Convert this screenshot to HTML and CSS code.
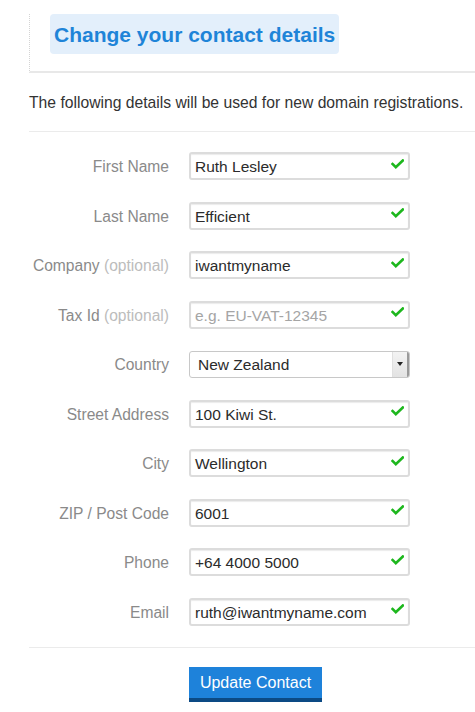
FILE: index.html
```html
<!DOCTYPE html>
<html>
<head>
<meta charset="utf-8">
<link rel="stylesheet" href="styles.css">
</head>
<body>
<div class="page">
  <div class="header">
    <h1 class="title">Change your contact details</h1>
  </div>
  <p class="intro">The following details will be used for new domain registrations.</p>
  <form class="form">
    <div class="row"><label class="label">First Name</label><div class="field"><span class="value">Ruth Lesley</span><svg class="check" viewBox="0 0 13 10"><polyline points="1.5,5 4.8,8.2 11.8,1.5"/></svg></div></div>
    <div class="row"><label class="label">Last Name</label><div class="field"><span class="value">Efficient</span><svg class="check" viewBox="0 0 13 10"><polyline points="1.5,5 4.8,8.2 11.8,1.5"/></svg></div></div>
    <div class="row"><label class="label">Company <span class="opt">(optional)</span></label><div class="field"><span class="value">iwantmyname</span><svg class="check" viewBox="0 0 13 10"><polyline points="1.5,5 4.8,8.2 11.8,1.5"/></svg></div></div>
    <div class="row"><label class="label">Tax Id <span class="opt">(optional)</span></label><div class="field"><span class="value placeholder">e.g. EU-VAT-12345</span><svg class="check" viewBox="0 0 13 10"><polyline points="1.5,5 4.8,8.2 11.8,1.5"/></svg></div></div>
    <div class="row"><label class="label">Country</label><div class="select"><span class="value">New Zealand</span><span class="arrow"><span class="tri"></span></span></div></div>
    <div class="row"><label class="label">Street Address</label><div class="field"><span class="value">100 Kiwi St.</span><svg class="check" viewBox="0 0 13 10"><polyline points="1.5,5 4.8,8.2 11.8,1.5"/></svg></div></div>
    <div class="row"><label class="label">City</label><div class="field"><span class="value">Wellington</span><svg class="check" viewBox="0 0 13 10"><polyline points="1.5,5 4.8,8.2 11.8,1.5"/></svg></div></div>
    <div class="row"><label class="label">ZIP / Post Code</label><div class="field"><span class="value">6001</span><svg class="check" viewBox="0 0 13 10"><polyline points="1.5,5 4.8,8.2 11.8,1.5"/></svg></div></div>
    <div class="row"><label class="label">Phone</label><div class="field"><span class="value">+64 4000 5000</span><svg class="check" viewBox="0 0 13 10"><polyline points="1.5,5 4.8,8.2 11.8,1.5"/></svg></div></div>
    <div class="row"><label class="label">Email</label><div class="field"><span class="value">ruth@iwantmyname.com</span><svg class="check" viewBox="0 0 13 10"><polyline points="1.5,5 4.8,8.2 11.8,1.5"/></svg></div></div>
    <div class="actions"><button type="button" class="btn">Update Contact</button></div>
  </form>
</div>
</body>
</html>
```
FILE: styles.css
```css
* { box-sizing: border-box; }
body {
  margin: 0;
  font-family: "Liberation Sans", Arial, Helvetica, sans-serif;
  color: #333;
  background: #fff;
}
.page {
  padding: 14px 0 0 29px;
}
.header {
  border-left: 1px dotted #d4d4d4;
  border-bottom: 2px solid #e8e8e8;
  padding: 0 0 17px 20px;
}
.title {
  display: inline-block;
  margin: 0;
  padding: 0 4px;
  height: 40px;
  line-height: 42px;
  font-size: 21px;
  font-weight: bold;
  color: #1e84d8;
  background: #e3effb;
  border-radius: 4px;
}
.intro {
  margin: 0;
  padding: 21px 0 19px;
  font-size: 15.7px;
  line-height: 18px;
  color: #333;
  border-bottom: 1px solid #ebebeb;
}
.form {
  padding-top: 20px;
}
.row {
  display: grid;
  grid-template-columns: 140px 221px;
  column-gap: 20px;
  align-items: center;
  margin-bottom: 21.5px;
  height: 28px;
}
.label {
  text-align: right;
  font-size: 15.6px;
  color: #8a8a8a;
  padding-top: 2px;
}
.opt {
  color: #bcbcbc;
}
.field {
  display: flex;
  align-items: center;
  justify-content: space-between;
  height: 28px;
  border: 2px solid #dcdcdc;
  border-radius: 3px;
  padding: 0 4px 0 4px;
  background: #fff;
  box-shadow: inset 0 1px 1px rgba(0,0,0,0.08);
}
.value {
  font-size: 15.5px;
  color: #2b2b2b;
  padding-top: 2px;
}
.placeholder {
  color: #a5a5a5;
}
.check {
  width: 13px;
  height: 10px;
  margin-top: -5px;
  fill: none;
  stroke: #1db71d;
  stroke-width: 2.6;
  stroke-linecap: square;
}
.select {
  display: flex;
  align-items: stretch;
  justify-content: space-between;
  height: 27px;
  border: 1px solid #c8c8c8;
  border-radius: 3px;
  background: #fff;
}
.select .value {
  align-self: center;
  padding-left: 8px;
}
.arrow {
  width: 17px;
  background: linear-gradient(#f3f3f3, #e3e3e3);
  border-left: 1px solid #e0e0e0;
  border-right: 2px solid #9a9a9a;
  border-radius: 0 2px 2px 0;
  display: flex;
  align-items: center;
  justify-content: center;
}
.tri {
  width: 0;
  height: 0;
  border-left: 3px solid transparent;
  border-right: 3px solid transparent;
  border-top: 4px solid #222;
}
.actions {
  border-top: 1px solid #ebebeb;
  margin-top: 20px;
  padding: 19px 0 0 160px;
}
.btn {
  font-family: "Liberation Sans", Arial, sans-serif;
  font-size: 16px;
  color: #fff;
  background: #1e82da;
  border: 0;
  border-bottom: 4px solid #0c4a84;
  height: 35px;
  width: 133px;
  padding: 0;
  line-height: 30px;
}
```
